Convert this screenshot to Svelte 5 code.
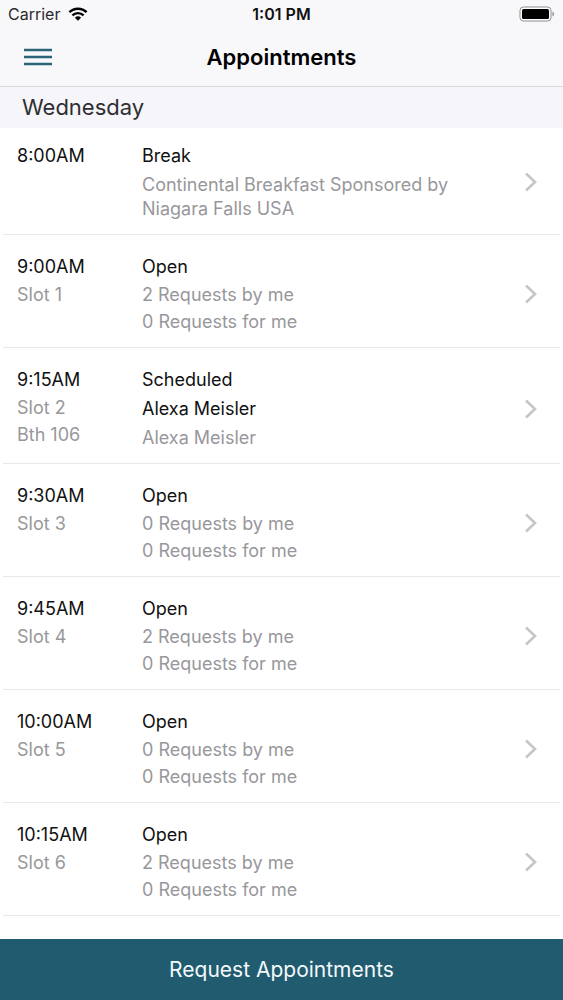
<script lang="ts">
	interface Line {
		text: string;
		kind: "note" | "name" | "sub";
	}

	interface Appointment {
		time: string;
		place: string[];
		status: string;
		lines: Line[];
	}

	const open = (time: string, slot: number, byMe: number, forMe: number): Appointment => ({
		time,
		place: [`Slot ${slot}`],
		status: "Open",
		lines: [
			{ text: `${byMe} Requests by me`, kind: "sub" },
			{ text: `${forMe} Requests for me`, kind: "sub" },
		],
	});

	let appointments: Appointment[] = [
		{
			time: "8:00AM",
			place: [],
			status: "Break",
			lines: [
				{
					text: "Continental Breakfast Sponsored by Niagara Falls USA",
					kind: "note",
				},
			],
		},
		open("9:00AM", 1, 2, 0),
		{
			time: "9:15AM",
			place: ["Slot 2", "Bth 106"],
			status: "Scheduled",
			lines: [
				{ text: "Alexa Meisler", kind: "name" },
				{ text: "Alexa Meisler", kind: "sub" },
			],
		},
		open("9:30AM", 3, 0, 0),
		open("9:45AM", 4, 2, 0),
		open("10:00AM", 5, 0, 0),
		open("10:15AM", 6, 2, 0),
	];
</script>

<div class="screen">
	<header>
		<div class="status">
			<div class="carrier">
				<span>Carrier</span>
				<svg width="20" height="14" viewBox="0 0 20 14" fill="none" aria-hidden="true">
					<path d="M1.4 5.2a12.4 12.4 0 0 1 17.2 0" stroke="#000" stroke-width="2.5" />
					<path d="M4.4 8.4a8 8 0 0 1 11.2 0" stroke="#000" stroke-width="2.3" />
					<path d="M10 13.8 6.9 10.8a4.5 4.5 0 0 1 6.2 0Z" fill="#000" />
				</svg>
			</div>
			<time>1:01 PM</time>
			<div class="battery">
				<svg width="36" height="16" viewBox="0 0 36 16" aria-hidden="true">
					<rect x="1" y="1" width="31" height="14" rx="3.5" fill="#fff" stroke="#8d8c90" />
					<rect x="3" y="3" width="27" height="10" rx="1.6" fill="#000" />
					<path d="M33.5 5.5c2 .8 2 4.2 0 5Z" fill="#8d8c90" />
				</svg>
			</div>
		</div>
		<nav>
			<button class="menu" aria-label="Menu">
				<svg width="30" height="18" viewBox="0 0 30 18" aria-hidden="true">
					<path d="M1 2h28M1 9h28M1 16h28" stroke="#2b6478" stroke-width="2.4" />
				</svg>
			</button>
			<h1>Appointments</h1>
		</nav>
	</header>

	<main>
		<h2>Wednesday</h2>
		<ul>
			{#each appointments as item}
				<li>
					<a href="#appointment">
						<div class="when">
							<p class="title">{item.time}</p>
							{#each item.place as place}
								<p class="sub">{place}</p>
							{/each}
						</div>
						<div class="what">
							<p class="title">{item.status}</p>
							{#each item.lines as line}
								<p class={line.kind}>{line.text}</p>
							{/each}
						</div>
						<svg width="14" height="20" viewBox="0 0 14 20" fill="none" aria-hidden="true">
							<path d="m2 1.5 9 8.5-9 8.5" stroke="#c6c6ca" stroke-width="2.6" />
						</svg>
					</a>
				</li>
			{/each}
		</ul>
	</main>

	<button class="request">Request Appointments</button>
</div>

<style>
	:global(body) {
		margin: 0;
	}

	.screen {
		display: flex;
		flex-direction: column;
		min-height: 100vh;
		background-color: #fff;
		color: #111;
		font-family: Inter, "Liberation Sans", sans-serif;
		font-size: 18px;
	}

	h1,
	h2,
	p,
	ul {
		margin: 0;
		padding: 0;
	}

	button {
		border: 0;
		font-family: inherit;
		cursor: pointer;
	}

	svg {
		display: block;
	}

	header {
		background-color: #f8f7fa;
		border-bottom: 1px solid #d9d8dc;
	}

	.status {
		display: grid;
		grid-template-columns: 1fr auto 1fr;
		align-items: center;
		height: 28px;
		padding: 0 8px;
		font-size: 16px;
	}

	.status time {
		font-weight: 600;
	}

	.carrier {
		display: flex;
		align-items: center;
		gap: 8px;
		color: #2a2a2c;
	}

	.battery {
		justify-self: end;
	}

	nav {
		display: grid;
		grid-template-columns: 1fr auto 1fr;
		align-items: center;
		height: 58px;
		padding: 0 23px;
	}

	.menu {
		justify-self: start;
		padding: 0;
		background: none;
	}

	h1 {
		color: #000;
		font-size: 22px;
		font-weight: 600;
	}

	h2 {
		padding: 0 22px;
		background-color: #f6f5f9;
		color: #2f2f31;
		font-size: 22px;
		font-weight: 400;
		line-height: 41px;
	}

	ul {
		list-style: none;
	}

	li {
		margin: 0 3px;
		border-bottom: 1px solid #e9e9eb;
	}

	li a {
		display: flex;
		align-items: center;
		padding: 18px 22px 12px 14px;
		color: inherit;
		text-decoration: none;
	}

	li:first-child a {
		padding-top: 14px;
	}

	.when {
		flex: none;
		align-self: flex-start;
		width: 125px;
	}

	.what {
		flex: 1;
		padding-right: 48px;
	}

	.title {
		line-height: 28px;
	}

	.name {
		line-height: 30px;
	}

	.sub {
		color: #98979b;
		line-height: 27px;
	}

	.note {
		padding: 3px 0 1px;
		color: #98979b;
		line-height: 24px;
	}

	.request {
		position: sticky;
		bottom: 0;
		margin-top: auto;
		padding: 0;
		background-color: #215b6f;
		color: #f3f8fa;
		font-size: 21px;
		line-height: 61px;
	}
</style>
